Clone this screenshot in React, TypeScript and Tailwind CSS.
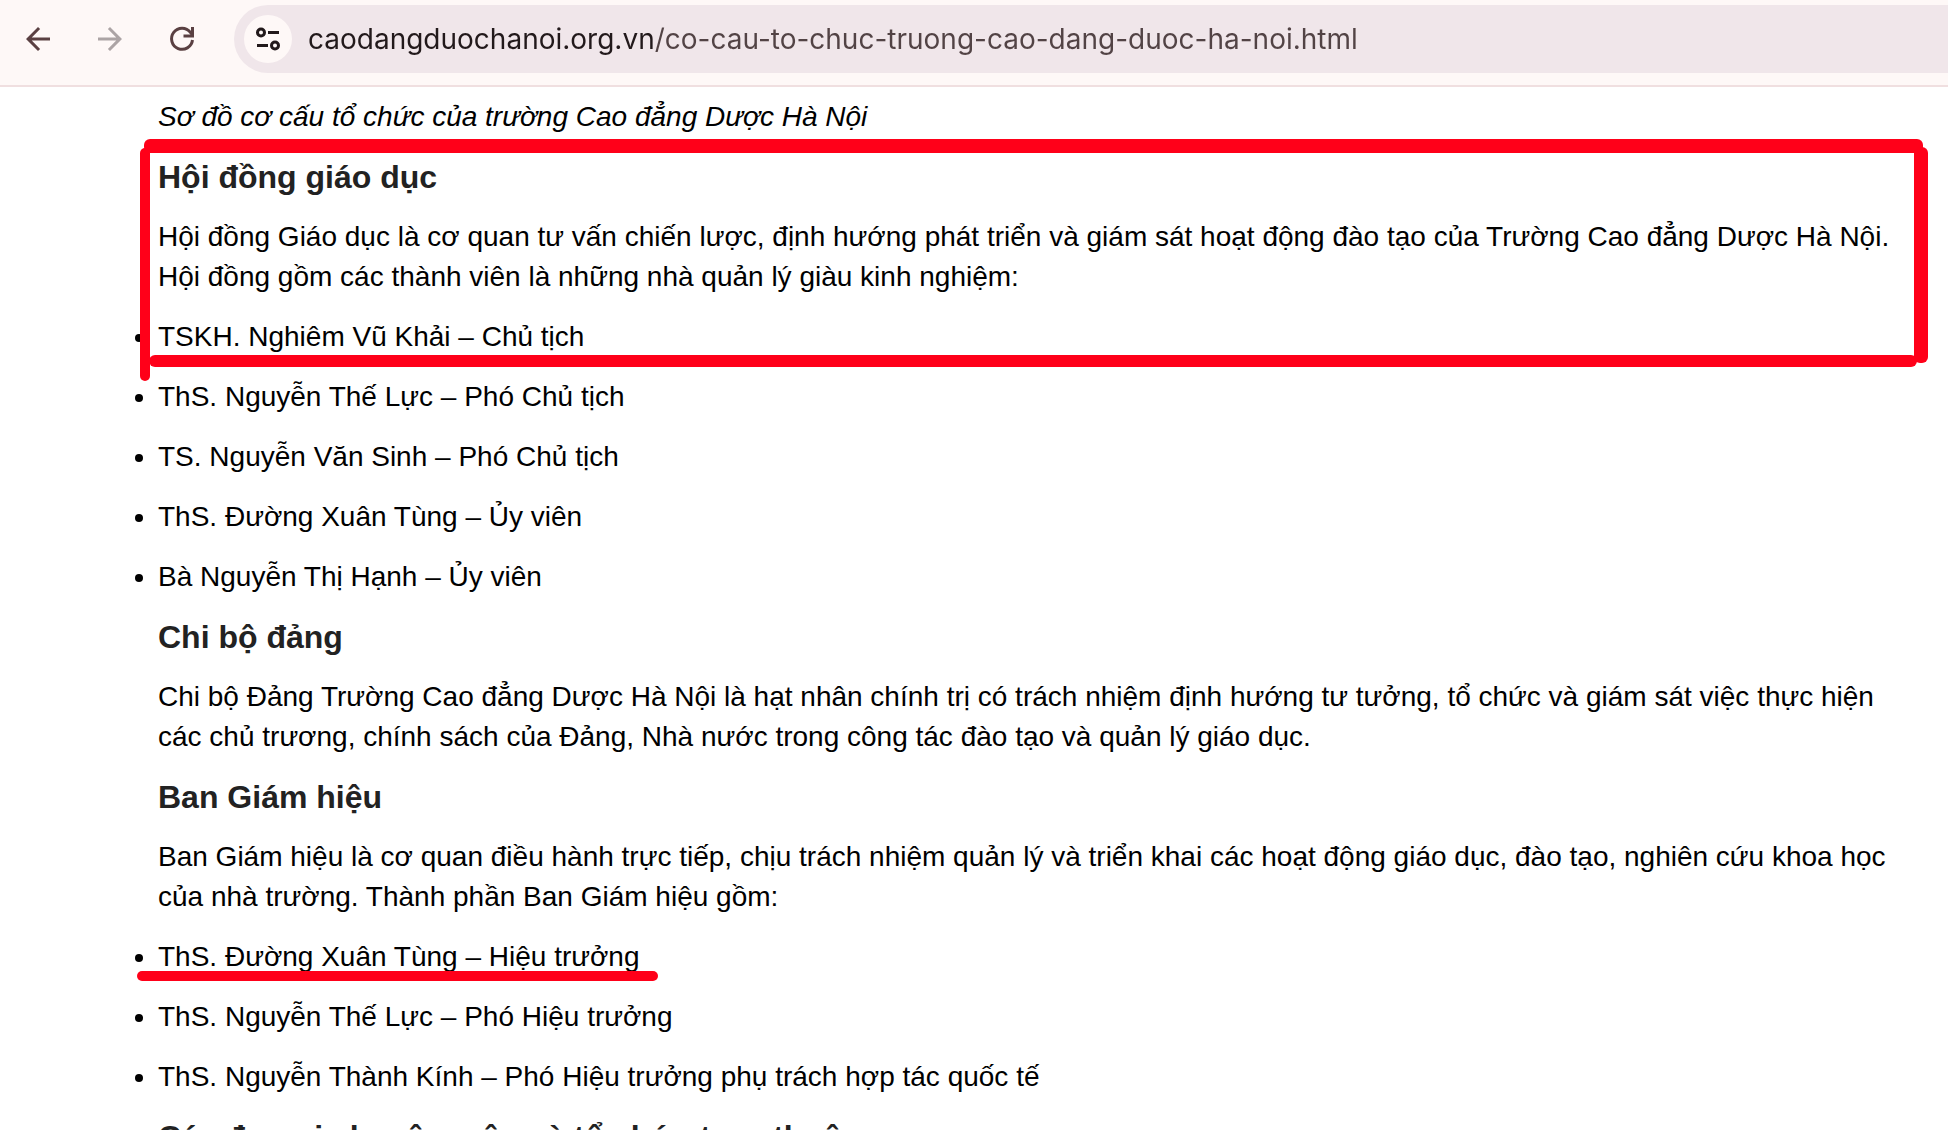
import React from 'react';

const councilMembers = [
  'TSKH. Nghiêm Vũ Khải – Chủ tịch',
  'ThS. Nguyễn Thế Lực – Phó Chủ tịch',
  'TS. Nguyễn Văn Sinh – Phó Chủ tịch',
  'ThS. Đường Xuân Tùng – Ủy viên',
  'Bà Nguyễn Thị Hạnh – Ủy viên',
];

const boardMembers = [
  { name: 'ThS. Đường Xuân Tùng – Hiệu trưởng', underlined: true },
  { name: 'ThS. Nguyễn Thế Lực – Phó Hiệu trưởng', underlined: false },
  { name: 'ThS. Nguyễn Thành Kính – Phó Hiệu trưởng phụ trách hợp tác quốc tế', underlined: false },
];

const Heading: React.FC<{ children: React.ReactNode }> = ({ children }) => (
  <h3 className="text-[32px] leading-10 font-bold text-[#222222]">{children}</h3>
);

const ListItem: React.FC<{ children: React.ReactNode; underlined?: boolean }> = ({ children, underlined }) => (
  <li className="relative">
    <span className="absolute -left-[23px] top-[17px] size-2 rounded-full bg-black"></span>
    {children}
    {underlined && (
      <span className="absolute -left-[21px] top-[34px] h-[10px] w-[521px] rounded-full bg-[#ff0019]"></span>
    )}
  </li>
);

const Toolbar: React.FC = () => (
  <header className="flex items-center border-b-2 border-[#f0dfe0] bg-[#fef8f7] pt-[5px] pb-3 pl-5">
    <nav className="flex gap-9 text-[#5a4042]">
      <button aria-label="Back">
        <svg className="size-9" viewBox="0 0 24 24" fill="currentColor">
          <path d="M20 11H7.83l5.59-5.59L12 4l-8 8 8 8 1.41-1.41L7.83 13H20v-2z" />
        </svg>
      </button>
      <button aria-label="Forward" className="text-[#aca4a5]">
        <svg className="size-9" viewBox="0 0 24 24" fill="currentColor">
          <path d="M12 4l-1.41 1.41L16.17 11H4v2h12.17l-5.58 5.59L12 20l8-8z" />
        </svg>
      </button>
      <button aria-label="Reload">
        <svg className="size-9" viewBox="0 0 24 24" fill="none" stroke="currentColor" strokeWidth="2">
          <path d="M19 12.7a7 7 0 1 1-1.4-5.1L19 9.3" />
          <path d="M19 4v6h-6" />
        </svg>
      </button>
    </nav>
    <div className="ml-[34px] flex h-[68px] flex-1 items-center rounded-l-full bg-[#f0e6ea] pl-[10px]">
      <button
        aria-label="Site information"
        className="flex size-12 items-center justify-center rounded-full bg-[#fef8f7] text-[#22191b]"
      >
        <svg className="size-7" viewBox="0 0 28 28" fill="none" stroke="currentColor" strokeWidth="3">
          <circle cx="7" cy="7.5" r="3.5" />
          <path d="M14 7.5h11M3 20.5h11" />
          <circle cx="21" cy="20.5" r="3.5" />
        </svg>
      </button>
      <input
        type="text"
        aria-label="Address"
        defaultValue="caodangduochanoi.org.vn/co-cau-to-chuc-truong-cao-dang-duoc-ha-noi.html"
        className="ml-4 h-12 flex-1 bg-[linear-gradient(to_right,#22191b_346px,#524345_346px)] bg-clip-text font-['Inter',sans-serif] text-[28px] text-transparent outline-none"
      />
    </div>
  </header>
);

// Red marker strokes drawn around the council section
const MarkerFrame: React.FC = () => (
  <div className="pointer-events-none absolute inset-x-0 top-[52px] h-[242px]">
    <span className="absolute top-0 right-[25px] left-36 h-[14px] rounded-md bg-[#ff0019]"></span>
    <span className="absolute top-2 right-5 h-[216px] w-[14px] rounded-md bg-[#ff0019]"></span>
    <span className="absolute top-[216px] right-[31px] left-[149px] h-3 rounded-md bg-[#ff0019]"></span>
    <span className="absolute top-[9px] left-[140px] h-[233px] w-[10px] rounded-md bg-[#ff0019]"></span>
  </div>
);

const App: React.FC = () => {
  return (
    <div className="flex h-screen flex-col overflow-hidden bg-white font-['Liberation_Sans',Arial,sans-serif] text-[28px] leading-10 text-black">
      <Toolbar />
      <main className="relative flex-1">
        <article className="flex flex-col gap-5 pt-[10px] pr-10 pl-[158px]">
          <p className="italic">Sơ đồ cơ cấu tổ chức của trường Cao đẳng Dược Hà Nội</p>

          <Heading>Hội đồng giáo dục</Heading>
          <p>
            Hội đồng Giáo dục là cơ quan tư vấn chiến lược, định hướng phát triển và giám sát hoạt động đào tạo của
            Trường Cao đẳng Dược Hà Nội. Hội đồng gồm các thành viên là những nhà quản lý giàu kinh nghiệm:
          </p>
          <ul className="flex flex-col gap-5">
            {councilMembers.map((member) => (
              <ListItem key={member}>{member}</ListItem>
            ))}
          </ul>

          <Heading>Chi bộ đảng</Heading>
          <p>
            Chi bộ Đảng Trường Cao đẳng Dược Hà Nội là hạt nhân chính trị có trách nhiệm định hướng tư tưởng, tổ chức
            và giám sát việc thực hiện các chủ trương, chính sách của Đảng, Nhà nước trong công tác đào tạo và quản lý
            giáo dục.
          </p>

          <Heading>Ban Giám hiệu</Heading>
          <p>
            Ban Giám hiệu là cơ quan điều hành trực tiếp, chịu trách nhiệm quản lý và triển khai các hoạt động giáo
            dục, đào tạo, nghiên cứu khoa học của nhà trường. Thành phần Ban Giám hiệu gồm:
          </p>
          <ul className="flex flex-col gap-5">
            {boardMembers.map((member) => (
              <ListItem key={member.name} underlined={member.underlined}>
                {member.name}
              </ListItem>
            ))}
          </ul>

          <Heading>Các đơn vị chuyên môn và tổ chức trực thuộc</Heading>
        </article>
        <MarkerFrame />
      </main>
    </div>
  );
};

export default App;
